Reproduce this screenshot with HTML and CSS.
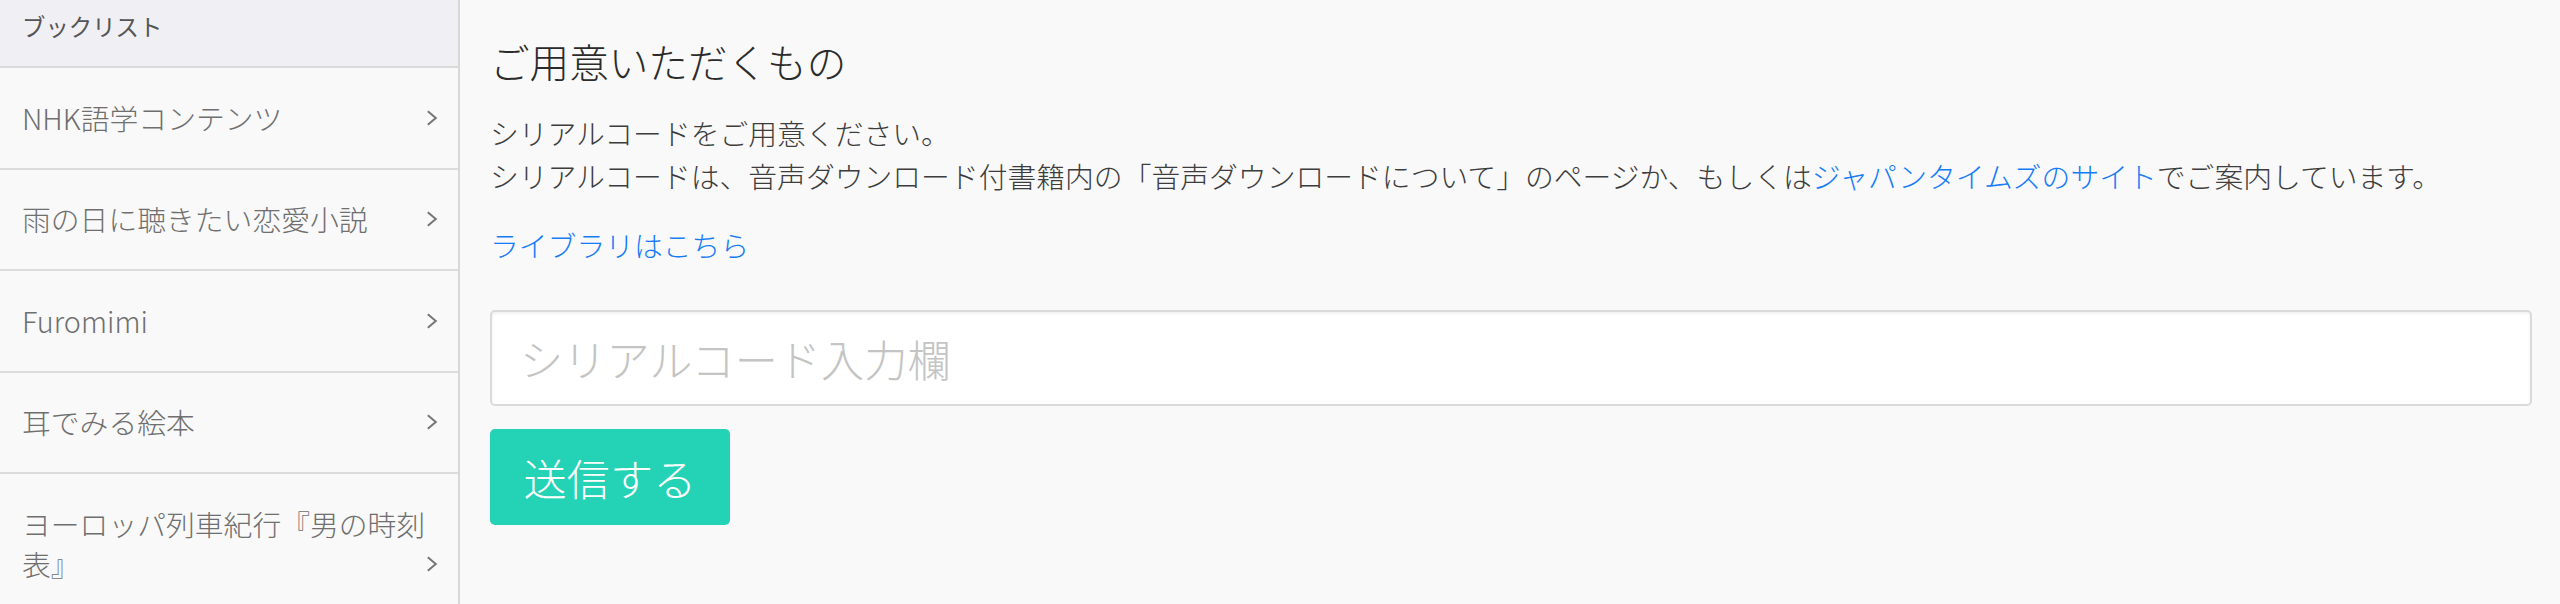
FILE: index.html
```html
<!DOCTYPE html>
<html lang="ja">
<head>
<meta charset="utf-8">
<title>ご用意いただくもの</title>
<link rel="stylesheet" href="styles.css">
</head>
<body>
<div class="layout">
  <aside class="sidebar">
    <div class="sidebar-header">ブックリスト</div>
    <ul class="book-list">
      <li class="book-item"><span class="book-title">NHK語学コンテンツ</span><span class="chev"><svg viewBox="0 0 12 16" width="12" height="16"><polyline points="1.8,1.2 9.8,8 1.8,14.8" fill="none" stroke="#767676" stroke-width="2"/></svg></span></li>
      <li class="book-item"><span class="book-title">雨の日に聴きたい恋愛小説</span><span class="chev"><svg viewBox="0 0 12 16" width="12" height="16"><polyline points="1.8,1.2 9.8,8 1.8,14.8" fill="none" stroke="#767676" stroke-width="2"/></svg></span></li>
      <li class="book-item"><span class="book-title">Furomimi</span><span class="chev"><svg viewBox="0 0 12 16" width="12" height="16"><polyline points="1.8,1.2 9.8,8 1.8,14.8" fill="none" stroke="#767676" stroke-width="2"/></svg></span></li>
      <li class="book-item"><span class="book-title">耳でみる絵本</span><span class="chev"><svg viewBox="0 0 12 16" width="12" height="16"><polyline points="1.8,1.2 9.8,8 1.8,14.8" fill="none" stroke="#767676" stroke-width="2"/></svg></span></li>
      <li class="book-item"><span class="book-title">ヨーロッパ列車紀行『男の時刻表』</span><span class="chev"><svg viewBox="0 0 12 16" width="12" height="16"><polyline points="1.8,1.2 9.8,8 1.8,14.8" fill="none" stroke="#767676" stroke-width="2"/></svg></span></li>
    </ul>
  </aside>
  <main class="content">
    <h1 class="title">ご用意いただくもの</h1>
    <p class="desc">シリアルコードをご用意ください。<br>シリアルコードは、音声ダウンロード付書籍内の「音声ダウンロードについて」のページか、もしくは<a class="link" href="#">ジャパンタイムズのサイト</a>でご案内しています。</p>
    <p class="library"><a class="link" href="#">ライブラリはこちら</a></p>
    <form class="serial-form">
      <input class="serial-input" type="text" placeholder="シリアルコード入力欄">
      <div class="actions"><button class="submit" type="button">送信する</button></div>
    </form>
  </main>
</div>
</body>
</html>
```

FILE: styles.css
```css
* { box-sizing: border-box; }

html, body {
  margin: 0;
  padding: 0;
  height: 100%;
  background: #f9f9f9;
  font-family: "Noto Sans CJK JP", "Noto Sans", sans-serif;
  font-weight: 300;
  overflow: hidden;
}

.layout {
  display: flex;
  min-height: 604px;
}

.sidebar {
  width: 460px;
  flex: 0 0 460px;
  border-right: 2px solid #d8d8d8;
  background: #f9f9f9;
}

.sidebar-header {
  height: 68px;
  padding: 10px 22px 0;
  background: #efeff4;
  border-bottom: 2px solid #dadada;
  font-size: 23.4px;
  font-weight: 400;
  line-height: 33px;
  color: #555;
}

.book-list {
  list-style: none;
  margin: 0;
  padding: 0;
}

.book-item {
  display: flex;
  align-items: flex-end;
  padding: 29.75px 20px 29.75px 22px;
  border-bottom: 2px solid #dcdcdc;
  font-size: 28.8px;
  line-height: 40px;
  color: #6f6f6f;
}

.book-title {
  flex: 1;
  min-width: 0;
}

.chev {
  flex: 0 0 12px;
  height: 40px;
  display: flex;
  align-items: center;
}

.chev svg { display: block; }

.content {
  flex: 1;
  padding: 0 28px 0 30px;
  color: #3d3d3d;
}

.title {
  margin: 37px 0 26px;
  font-size: 39.6px;
  line-height: 47.5px;
  font-weight: 300;
  color: #2b2b2b;
}

.desc, .library {
  margin: 0 0 26px;
  font-size: 28.8px;
  line-height: 43.2px;
}

.library { margin-bottom: 44px; }

.link {
  color: #167cf6;
  text-decoration: none;
}

.serial-form {
  display: flex;
  flex-direction: column;
}

.serial-input {
  width: 100%;
  height: 96px;
  padding: 0 28px;
  border: 2px solid #dadada;
  border-radius: 5px;
  background: #fff;
  box-shadow: inset 0 2px 3px rgba(0, 0, 0, 0.06);
  font-family: "Noto Sans CJK JP", "Noto Sans", sans-serif;
  font-weight: 300;
  font-size: 43.2px;
  color: #444;
  outline: none;
}

.serial-input::placeholder {
  color: #c4c4c4;
}

.actions {
  display: flex;
  margin-top: 23px;
}

.submit {
  width: 240px;
  height: 96px;
  padding: 0;
  border: none;
  border-radius: 5px;
  background: #24d2b5;
  color: #fff;
  font-family: "Noto Sans CJK JP", "Noto Sans", sans-serif;
  font-weight: 300;
  font-size: 43.2px;
  line-height: 1;
  cursor: pointer;
}
```
